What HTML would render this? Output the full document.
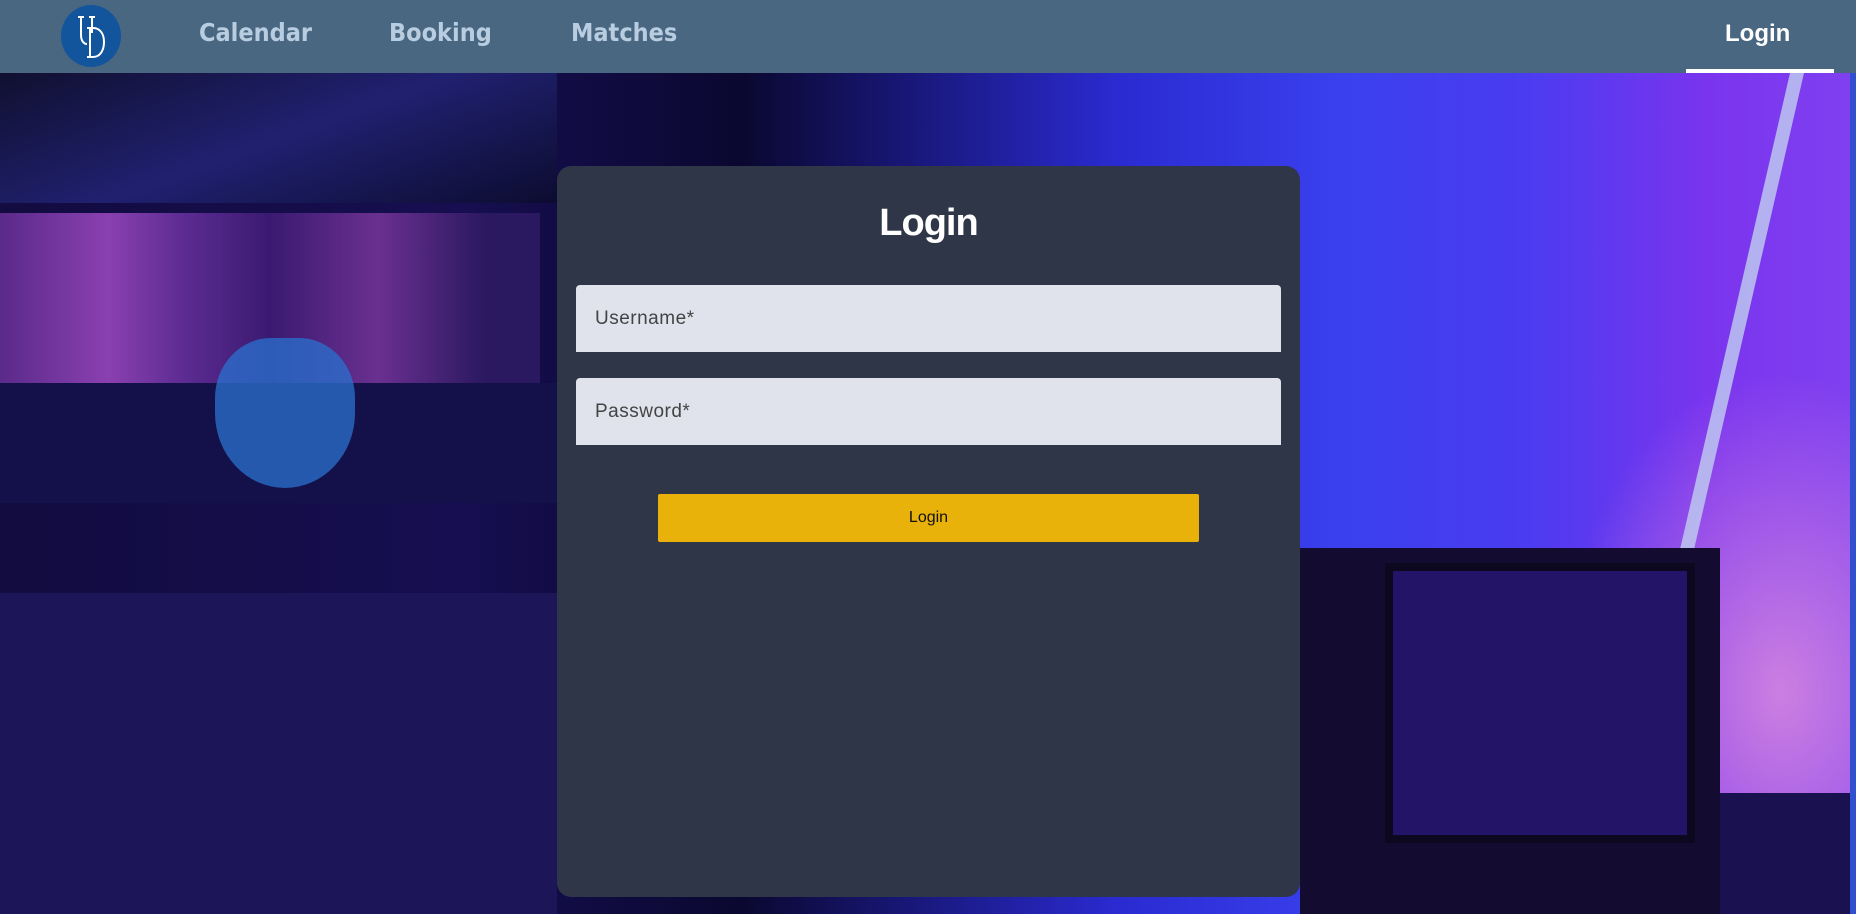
<!DOCTYPE html>
<html><head><meta charset="utf-8"><style>
*{margin:0;padding:0;box-sizing:border-box}
html,body{width:1856px;height:914px;overflow:hidden;font-family:"Liberation Sans",sans-serif}
body{position:relative;background:#0c0a2a}
.bg{position:absolute;left:0;top:73px;width:1856px;height:841px;overflow:hidden;
background:linear-gradient(90deg,#120c40 0%,#160e50 25%,#0a0830 40%,#2a2ad0 60%,#3a40ee 72%,#4a3cf0 82%,#7a34ee 92%,#8040f0 100%)}
.abs{position:absolute}
header{position:absolute;left:0;top:0;width:1856px;height:73px;background:#4a6782;z-index:5}
.nav{position:absolute;top:18px;font-family:"DejaVu Sans Condensed","Liberation Sans",sans-serif;font-weight:bold;font-size:25px;color:#b8cde0}
.card{position:absolute;left:557px;top:166px;width:743px;height:731px;background:#2e3647;border-radius:14px;z-index:3}
.card h1{position:absolute;top:36px;width:100%;text-align:center;color:#fff;font-size:38px;font-weight:bold;letter-spacing:-1px}
.field{position:absolute;left:19px;width:705px;height:67px;background:#e0e3ec;border-radius:4px 4px 0 0;color:#444;font-size:19px;padding:23px 0 0 19px;letter-spacing:.5px}
.btn{position:absolute;left:101px;top:328px;width:541px;height:48px;background:#e8b20a;border-radius:2px;text-align:center;line-height:48px;font-size:16px;color:#111}
</style></head><body>
<header>
<svg class="abs" style="left:61px;top:5px" width="60" height="62" viewBox="0 0 60 62"><ellipse cx="30" cy="31" rx="30" ry="31" fill="#12559c"/>
<path d="M17 12h6M20 12v18c0 6 3 9 6 9" stroke="#fff" stroke-width="2" fill="none"/><path d="M28 12h6M31 12v16" stroke="#fff" stroke-width="2"/>
<path d="M26 23h6c8 0 11 7 11 14s-3 15-11 15h-6M29 23v29" stroke="#fff" stroke-width="2" fill="none"/></svg>
<div class="nav" style="left:199px">Calendar</div>
<div class="nav" style="left:389px">Booking</div>
<div class="nav" style="left:571px">Matches</div>
<div class="abs" style="left:1725px;top:20px;color:#fff;font-weight:bold;font-size:24px">Login</div>
<div class="abs" style="left:1686px;top:69px;width:148px;height:4px;background:#fff"></div>
</header>
<div class="bg">
<div class="abs" style="left:1300px;top:0;width:556px;height:841px;background:radial-gradient(ellipse 220px 320px at 480px 620px,rgba(230,150,220,.75),rgba(160,70,230,0) 100%)"></div>
<div class="abs" style="left:1790px;top:0;width:14px;height:560px;background:#c0d0f0;transform:skewX(-13deg);transform-origin:top;opacity:.8"></div>
<div class="abs" style="left:0;top:0;width:557px;height:130px;background:linear-gradient(160deg,#101030,#202070 50%,#0c0c30)"></div>
<div class="abs" style="left:0;top:140px;width:540px;height:200px;background:linear-gradient(90deg,#5a2a8a,#8a40b0 20%,#5a2a90 35%,#3a1a70 50%,#6a3090 70%,#2a1860 90%)"></div>
<div class="abs" style="left:0;top:310px;width:557px;height:120px;background:#14104a"></div>
<div class="abs" style="left:215px;top:265px;width:140px;height:150px;background:#2a72d0;border-radius:40% 40% 50% 50%;opacity:.75"></div>
<div class="abs" style="left:0;top:520px;width:557px;height:321px;background:#1c1658"></div>
<div class="abs" style="left:1300px;top:475px;width:420px;height:366px;background:#140c30"></div>
<div class="abs" style="left:1385px;top:490px;width:310px;height:280px;background:#241468;border:8px solid #0c0820"></div>
<div class="abs" style="left:1720px;top:720px;width:136px;height:121px;background:#1a1250"></div>
<div class="abs" style="left:1850px;top:0;width:6px;height:841px;background:#3050d0"></div>
</div>
<div class="card">
<h1>Login</h1>
<div class="field" style="top:119px">Username*</div>
<div class="field" style="top:212px">Password*</div>
<div class="btn">Login</div>
</div>
</body></html>
